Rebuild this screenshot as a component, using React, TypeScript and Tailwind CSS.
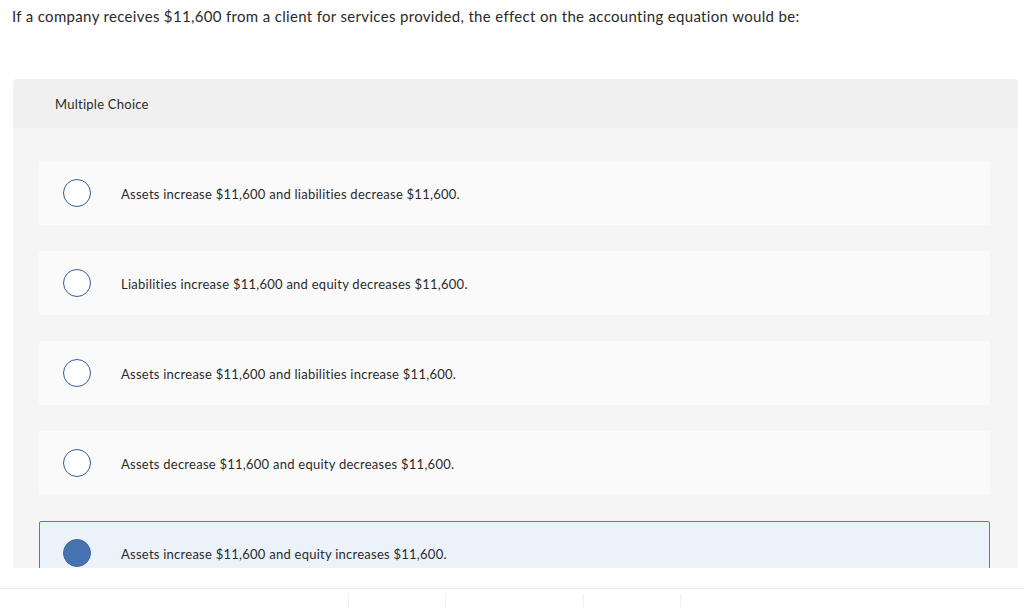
const options = [
  { text: "Assets increase $11,600 and liabilities decrease $11,600.", selected: false },
  { text: "Liabilities increase $11,600 and equity decreases $11,600.", selected: false },
  { text: "Assets increase $11,600 and liabilities increase $11,600.", selected: false },
  { text: "Assets decrease $11,600 and equity decreases $11,600.", selected: false },
  { text: "Assets increase $11,600 and equity increases $11,600.", selected: true },
];

const Option = ({ text, selected }: { text: string; selected: boolean }) => (
  <div
    className={
      selected
        ? "flex items-center h-[64px] pl-[23px] bg-[#ebf2fa] border border-[#4a7fc4] rounded-[2px] shrink-0"
        : "flex items-center h-[64px] pl-[24px] bg-[#fafafa] rounded-[2px] shrink-0"
    }
  >
    {selected ? (
      <span className="block w-[28px] h-[28px] rounded-full bg-[#4673b0] border border-[#3c66a0] shrink-0" />
    ) : (
      <span className="block w-[28px] h-[28px] rounded-full bg-white border-[1.5px] border-[#2f5f98] shrink-0" />
    )}
    <span className="ml-[30px] pt-[3px] text-[13px] tracking-[0.25px] text-[#2a2a2a]">{text}</span>
  </div>
);

const App = () => {
  return (
    <div
      className="w-[1024px] h-[608px] bg-white overflow-hidden"
      style={{ fontFamily: "'Lato', 'Liberation Sans', sans-serif" }}
    >
      <div className="h-[568px] overflow-hidden">
        <p className="pl-[12px] pt-[6px] text-[15px] tracking-[0.33px] text-[#2a2a2a] leading-[20px]">
          If a company receives $11,600 from a client for services provided, the effect on the accounting equation would be:
        </p>
        <div className="ml-[13px] mt-[53px] w-[1005px] rounded-t-[4px] bg-[#f5f5f5]">
          <div className="h-[49px] bg-[#f0f0f0] rounded-t-[4px] flex items-center pl-[42px] pt-[2px]">
            <span className="text-[13px] tracking-[0.25px] text-[#2a2a2a]">Multiple Choice</span>
          </div>
          <div className="pt-[33px] pl-[26px] pr-[28px] pb-[30px] flex flex-col gap-[26px]">
            {options.map((o) => (
              <Option key={o.text} text={o.text} selected={o.selected} />
            ))}
          </div>
        </div>
      </div>
      <div className="mt-[20px] border-t border-[#ececec] flex h-[20px] pt-[5px]">
        <div className="w-[348px]" />
        <div className="w-[97px] border-l border-[#f0f0f0]" />
        <div className="w-[138px] border-l border-[#f0f0f0]" />
        <div className="w-[97px] border-l border-[#f0f0f0]" />
        <div className="border-l border-[#f0f0f0]" />
      </div>
    </div>
  );
};

export default App;
